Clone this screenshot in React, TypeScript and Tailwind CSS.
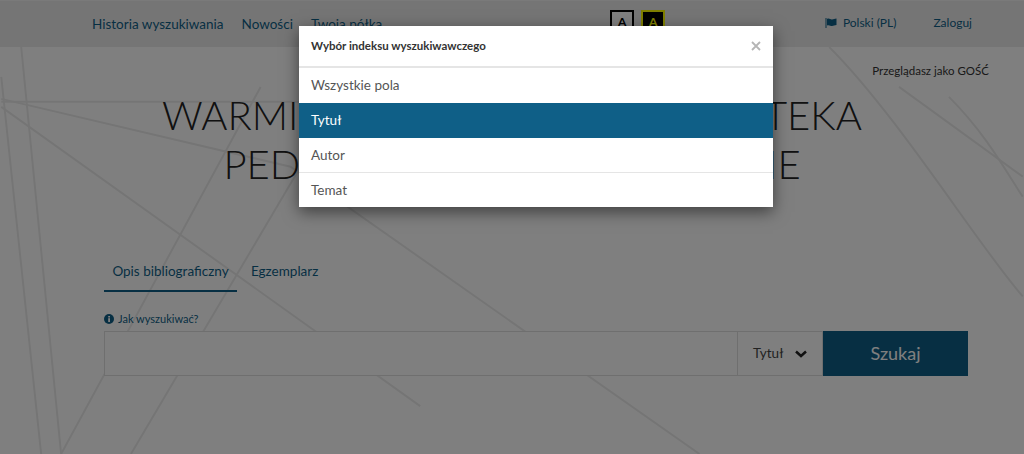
const font = "font-['Lato','Noto_Sans',sans-serif]";

function BackgroundLines() {
  return (
    <svg className="absolute inset-0 w-full h-full" viewBox="0 0 1024 408" fill="none" stroke="#ebebeb" strokeWidth="2">
      <path d="M0 60 L420 360" />
      <path d="M0 52 L290 120 L700 408" />
      <path d="M20 0 L60 408" />
      <path d="M0 30 L40 408" />
      <path d="M0 55 L300 55" />
      <path d="M60 408 L260 40" />
      <path d="M130 408 L300 120" />
      <path d="M900 40 L1024 130" />
      <path d="M950 50 C990 90 1010 130 1024 150" />
      <path d="M830 0 C900 70 980 200 1024 250" />
    </svg>
  );
}

function Header() {
  return (
    <header className="h-[47px] bg-[#ebebeb] border-t border-[#f5f5f5] flex items-start text-[13.5px] text-[#0f5f87]">
      <nav className="flex gap-[18px] pl-[92px] pt-[15px] leading-[16px]">
        <span>Historia wyszukiwania</span>
        <span>Nowości</span>
        <span>Twoja półka</span>
      </nav>
      <div className="flex gap-[7px] ml-[228px] mt-[9px]">
        <div className="w-[24px] h-[24px] border-2 border-black bg-white flex items-center justify-center text-[12px] font-bold text-black">A</div>
        <div className="w-[24px] h-[24px] border-2 border-[#ffff00] bg-black flex items-center justify-center text-[12px] font-bold text-[#ffff00]">A</div>
      </div>
      <div className="ml-auto flex gap-[37px] pr-[52px] pt-[14px] text-[12px] leading-[16px]">
        <span className="flex items-center gap-[6px]">
          <svg width="12" height="12" viewBox="0 0 12 12" fill="currentColor">
            <path d="M0.5 1h1v10h-1z" />
            <path d="M2 2c2-1.2 3.5 0.6 5 0.4 1.600-0.200 2.500-0.600 4.500-0.900v6.500c-2 0.300-3 0.900-4.500 1-1.500 0-3-1.400-5-0.500z" />
          </svg>
          Polski (PL)
        </span>
        <span>Zaloguj</span>
      </div>
    </header>
  );
}

function SearchForm() {
  return (
    <div className="mt-[63px] pl-[104px] pr-[56px]">
      <div className="flex text-[13.5px] leading-[16px] text-[#0f5f87]">
        <div className="w-[133px] h-[37px] pt-[8px] text-center border-b-2 border-[#0f5f87]">Opis bibliograficzny</div>
        <div className="ml-[14px] pt-[8px]">Egzemplarz</div>
      </div>
      <div className="mt-[20px] flex items-center gap-[4px] text-[11px] leading-[14px] text-[#0f5f87]">
        <svg width="10" height="10" viewBox="0 0 10 10">
          <circle cx="5" cy="5" r="5" fill="currentColor" />
          <rect x="4.200" y="4.200" width="1.800" height="3.800" fill="#fff" />
          <rect x="4.200" y="2" width="1.800" height="1.500" fill="#fff" />
        </svg>
        Jak wyszukiwać?
      </div>
      <div className="mt-[5px] flex h-[45px]">
        <div className="flex-1 bg-white border border-[#dedede]" />
        <div className="w-[85px] bg-white border-y border-r border-[#dedede] flex items-center pl-[15px] gap-[12px] text-[13.5px] text-[#444]">
          Tytuł
          <svg width="12" height="8" viewBox="0 0 12 8" fill="none" stroke="#222" strokeWidth="2.500">
            <path d="M1 1.500 L6 6 L11 1.500" />
          </svg>
        </div>
        <div className="w-[145px] bg-[#0f5f87] flex items-center justify-center text-[18px] text-white">Szukaj</div>
      </div>
    </div>
  );
}

function IndexModal() {
  return (
    <div className="absolute left-[299px] top-[26px] w-[474px] bg-white shadow-[0_5px_15px_rgba(0,0,0,0.5)] text-[13.5px] text-[#555]">
      <div className="h-[42px] border-b-2 border-[#e5e5e5] flex items-center justify-between pl-[12px] pr-[12px]">
        <span className="text-[11.5px] font-bold text-[#333]">Wybór indeksu wyszukiwawczego</span>
        <svg width="10" height="10" viewBox="0 0 10 10" stroke="#b5b5b5" strokeWidth="1.800">
          <path d="M1 1 L9 9 M9 1 L1 9" />
        </svg>
      </div>
      <div className="h-[35px] flex items-center pl-[12px]">Wszystkie pola</div>
      <div className="h-[35px] flex items-center pl-[12px] bg-[#0f5f87] text-white">Tytuł</div>
      <div className="h-[35px] flex items-center pl-[12px] border-b border-[#e5e5e5]">Autor</div>
      <div className="h-[34px] flex items-center pl-[12px]">Temat</div>
    </div>
  );
}

export default function App() {
  return (
    <div className={`${font} relative w-[1024px] h-[454px] overflow-hidden bg-white`}>
      <Header />
      <main className="relative h-[407px]">
        <BackgroundLines />
        <div className="relative">
          <p className="pr-[35px] pt-[16px] text-right text-[11.500px] leading-[16px] text-[#333]">Przeglądasz jako GOŚĆ</p>
          <h1 className="mt-[12px] text-center text-[40px] leading-[49px] font-light text-[#222]">
            WARMIŃSKO-MAZURSKA BIBLIOTEKA
            <br />
            PEDAGOGICZNA W OLSZTYNIE
          </h1>
          <div className="mx-auto w-[158px] h-[3px] bg-[#0f5f87]" />
          <SearchForm />
        </div>
      </main>
      {/* backdrop modala */}
      <div className="absolute inset-0 bg-black/50" />
      <IndexModal />
    </div>
  );
}
